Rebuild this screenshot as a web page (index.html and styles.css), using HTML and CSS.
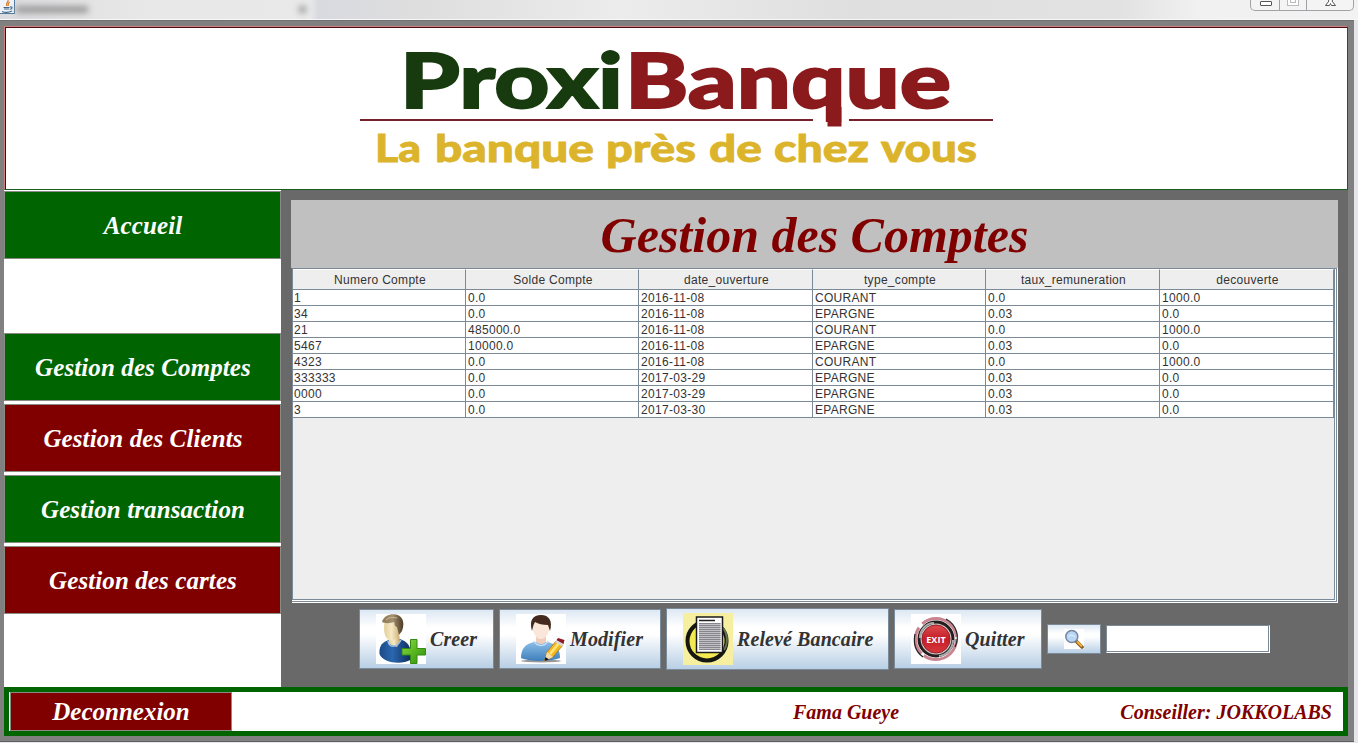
FILE: index.html
```
<!DOCTYPE html>
<html lang="fr">
<head>
<meta charset="utf-8">
<title>ProxiBanque</title>
<link rel="stylesheet" href="styles.css">
</head>
<body>
<div class="titlebar">
  <svg class="java" width="15" height="14" viewBox="0 0 15 14"><rect x="-1" y="-1" width="15.5" height="14.5" fill="#eef4fa" stroke="#557b9c"/><path d="M8 0C9 2 5 3 7 6M10 2C7 3 9 4 8 6" fill="none" stroke="#e07b28" stroke-width="1.2"/><path d="M3.5 7.5h6M4 9h5M2 11.5c3 1.2 7 1 10-.5M10 7c3-.6 2.500 2-.3 2.300" fill="none" stroke="#426788" stroke-width="1.100"/></svg>
  <div class="ghost"></div>
  <div class="ghost small"></div>
  <div class="controls">
    <span class="ctl"><svg width="28" height="10"><rect x="9.500" y="1.500" width="11" height="4" rx=".5" fill="#fff" stroke="#555"/></svg></span>
    <span class="ctl"><svg width="26" height="10"><rect x="7.500" y="-3.500" width="11" height="9" fill="#fff" stroke="#bbb"/><rect x="10.500" y="-1.500" width="5" height="4" fill="#fff" stroke="#bbb"/></svg></span>
    <span class="ctl"><svg width="46" height="10"><path d="M20-2l2 3-3.500 4.500h4l1-2 1 2h4L25 1l2-3" fill="#fff" stroke="#555"/></svg></span>
  </div>
</div>
<div class="frame">
  <header class="banner">
    <svg width="1342" height="161" viewBox="5 27 1342 161">
      <g class="brand">
        <text x="400" y="107.500" textLength="223" lengthAdjust="spacingAndGlyphs" fill="#173a0e" stroke="#173a0e">Proxi</text>
        <text x="625" y="107.500" textLength="326" lengthAdjust="spacingAndGlyphs" fill="#8a1a1c" stroke="#8a1a1c">Banque</text>
      </g>
      <path d="M832.500 107H841.500V126.500H827.500V107Z" fill="#8a1a1c"/>
      <path d="M360 120H813M849 120H993" stroke="#75202a" stroke-width="2"/>
      <g class="tagline">
        <text x="375" y="161.500" textLength="46" lengthAdjust="spacingAndGlyphs">La</text>
        <text x="435" y="161.500" textLength="159" lengthAdjust="spacingAndGlyphs">banque</text>
        <text x="606" y="161.500" textLength="90" lengthAdjust="spacingAndGlyphs">près</text>
        <text x="709" y="161.500" textLength="53" lengthAdjust="spacingAndGlyphs">de</text>
        <text x="774" y="161.500" textLength="95" lengthAdjust="spacingAndGlyphs">chez</text>
        <text x="881" y="161.500" textLength="96" lengthAdjust="spacingAndGlyphs">vous</text>
      </g>
    </svg>
  </header>
  <div class="body">
    <nav class="side">
      <button class="nav green home">Accueil</button>
      <button class="nav green">Gestion des Comptes</button>
      <button class="nav red">Gestion des Clients</button>
      <button class="nav green">Gestion transaction</button>
      <button class="nav red">Gestion des cartes</button>
    </nav>
    <main class="main">
      <h1 class="heading">Gestion des Comptes</h1>
      <div class="scroll"><div class="viewport">
        <div class="row head"><span>Numero Compte</span><span>Solde Compte</span><span>date_ouverture</span><span>type_compte</span><span>taux_remuneration</span><span>decouverte</span></div>
        <div class="row"><span>1</span><span>0.0</span><span>2016-11-08</span><span>COURANT</span><span>0.0</span><span>1000.0</span></div>
        <div class="row"><span>34</span><span>0.0</span><span>2016-11-08</span><span>EPARGNE</span><span>0.03</span><span>0.0</span></div>
        <div class="row"><span>21</span><span>485000.0</span><span>2016-11-08</span><span>COURANT</span><span>0.0</span><span>1000.0</span></div>
        <div class="row"><span>5467</span><span>10000.0</span><span>2016-11-08</span><span>EPARGNE</span><span>0.03</span><span>0.0</span></div>
        <div class="row"><span>4323</span><span>0.0</span><span>2016-11-08</span><span>COURANT</span><span>0.0</span><span>1000.0</span></div>
        <div class="row"><span>333333</span><span>0.0</span><span>2017-03-29</span><span>EPARGNE</span><span>0.03</span><span>0.0</span></div>
        <div class="row"><span>0000</span><span>0.0</span><span>2017-03-29</span><span>EPARGNE</span><span>0.03</span><span>0.0</span></div>
        <div class="row"><span>3</span><span>0.0</span><span>2017-03-30</span><span>EPARGNE</span><span>0.03</span><span>0.0</span></div>
      </div></div>
      <div class="actions">
        <button class="act creer">
          <svg width="50" height="50" viewBox="0 0 50 50">
            <defs>
              <linearGradient id="suit" x2="1"><stop offset="0" stop-color="#1c4a8a"/><stop offset=".4" stop-color="#2a67ae"/><stop offset="1" stop-color="#0c2a58"/></linearGradient>
              <linearGradient id="skin" x2="1"><stop offset="0" stop-color="#e3cf9a"/><stop offset=".45" stop-color="#f6e9c4"/><stop offset="1" stop-color="#c4a468"/></linearGradient>
              <linearGradient id="hair" x2="1"><stop offset="0" stop-color="#8c7650"/><stop offset=".5" stop-color="#a39070"/><stop offset="1" stop-color="#4b3b25"/></linearGradient>
              <linearGradient id="plus" x2="1" y2="1"><stop offset="0" stop-color="#8ade3d"/><stop offset="1" stop-color="#2c8e08"/></linearGradient>
            </defs>
            <rect width="50" height="50" fill="#fff"/>
            <path d="M3.500 40C3 32 6 28 13 26L24 25C32 28 35 32 36 45C28 51 7 50 3.500 40Z" fill="url(#suit)"/>
            <path d="M13 24L13 30L21 33L24 27L23 20Z" fill="url(#skin)"/>
            <path d="M12 27C13 34 21 34 25 26" fill="none" stroke="#9fc1e4" stroke-width="1.500"/>
            <path d="M8.500 8C7.500 16 8 23 13 26.500C19 27 24 22 25 12L17 5Z" fill="url(#skin)"/>
            <path d="M6 8C8 1 15-.5 20 .5C27 2 29 9 26 17L23 21L21 13C19 13 18 10 18.500 8C14 9.500 9 9.500 6 8Z" fill="url(#hair)"/>
            <path d="M10 6C13 3 17 3 21 4" fill="none" stroke="#cbbb98"/>
            <path d="M34.500 25.500H41V34.500H49.500V41H41V49.500H34.500V41H26V34.500H34.500Z" fill="url(#plus)" stroke="#338a14"/>
          </svg>Creer</button>
        <button class="act modifier">
          <svg width="50" height="50" viewBox="0 0 50 50">
            <defs><linearGradient id="shirt" y2="1" x2="0"><stop offset="0" stop-color="#8bbde9"/><stop offset="1" stop-color="#3e7fba"/></linearGradient></defs>
            <rect width="50" height="50" fill="#fff"/>
            <ellipse cx="25" cy="47" rx="20" ry="1.500" fill="#999"/>
            <path d="M5 44C5 35 9 30 18 28H32C40 30 44 35 44 44C34 48 14 48 5 44Z" fill="url(#shirt)"/>
            <path d="M20 22H30V27C29 31 21 31 20 27Z" fill="#f0cdbb"/>
            <path d="M18 27C21 33 29 33 32 27" fill="none" stroke="#c4def5" stroke-width="1.500"/>
            <path d="M17 8H33V15C33 20 29 25 25 25C21 25 17 20 17 15Z" fill="#fbe6da"/>
            <path d="M16 17C13 6 17 1 25 1C33 1 37 7 34 17L32 11C27 11 22 10 19 8L17.500 11Z" fill="#43291e"/>
            <path d="M28.500 47L31 38L40 27L47 31L37 43Z" fill="#f3b920" stroke="#ab741b" stroke-width=".8"/>
            <path d="M34 40L43 29" stroke="#ffe47a" stroke-width="2.500"/>
            <path d="M31 38L37 43L28.500 47Z" fill="#f4dcae"/><path d="M29.500 43L33 45.500L28.500 47Z" fill="#111"/>
            <path d="M39 28L41 25.500L48 29.500L46 32.500Z" fill="#d8d8d8"/><path d="M40.500 26L42 24L48.500 26L47.500 30Z" fill="#8f1824"/>
          </svg>Modifier</button>
        <button class="act releve">
          <svg width="50" height="52" viewBox="0 0 50 52">
            <rect width="50" height="52" fill="#f6efa0"/>
            <circle cx="24" cy="28" r="19.500" fill="#f4e950" stroke="#15160f" stroke-width="4"/>
            <path d="M40 15C45 21 45 31 41 37" fill="none" stroke="#667052" stroke-width="2"/>
            <path d="M13.500 4H39.500V39.500H13.500Z" fill="#fff" stroke="#1b1b1b" stroke-width="1.500"/>
            <path d="M16 7.500H32" stroke="#222" stroke-width="1.500"/>
            <rect x="16" y="10" width="21.500" height="27" fill="#c0c0c5"/>
            <path d="M16 10.500H37.500M16 12.500H37.500M16 14.500H37.500M16 16.500H37.500M16 18.500H37.500M16 20.500H37.500M16 22.500H37.500M16 24.500H37.500M16 26.500H37.500M16 28.500H37.500M16 30.500H37.500M16 32.500H37.500M16 34.500H37.500M16 36.500H37.500" stroke="#85858b"/>
          </svg>Relevé Bancaire</button>
        <button class="act quitter">
          <svg width="50" height="50" viewBox="0 0 50 50">
            <defs><linearGradient id="exit" x2="0" y2="1"><stop offset="0" stop-color="#dd4c50"/><stop offset=".5" stop-color="#c51d26"/><stop offset="1" stop-color="#d8383e"/></linearGradient></defs>
            <rect width="50" height="50" fill="#fff"/>
            <circle cx="25" cy="25" r="20.500" fill="none" stroke="#c88491" stroke-width="3" stroke-dasharray="45 3 28 5"/>
            <path d="M35 5C46 11 49 23 44 33M12 43C5 38 2 30 4 20" fill="none" stroke="#222" stroke-width="1.200"/>
            <circle cx="25" cy="25" r="17" fill="#c9c3c4" stroke="#241c1d" stroke-width="3"/>
            <path d="M9 24C9 16 15 9 23 9M42 26C42 34 36 41 28 42" fill="none" stroke="#aaa" stroke-width="2"/>
            <circle cx="25" cy="25" r="14" fill="url(#exit)" stroke="#992029"/>
            <text x="25" y="28.700" class="exit-label" text-anchor="middle">EXIT</text>
          </svg>Quitter</button>
        <button class="act find" aria-label="Rechercher">
          <svg width="20" height="20" viewBox="0 0 20 20"><rect width="20" height="20" fill="#fff"/><path d="M12 12L18 18" stroke="#8a5b20" stroke-width="3.600" stroke-linecap="round"/><path d="M13 12.500L18 17.500" stroke="#efb43c" stroke-width="2"/><circle cx="7.800" cy="7.500" r="6" fill="#b9d6f5" stroke="#7785a0" stroke-width="1.500"/><path d="M4.500 7.500Q8 4.500 11 8" fill="none" stroke="#e8f4ff"/></svg>
        </button>
        <input class="query" type="text" aria-label="Recherche">
      </div>
    </main>
  </div>
  <footer class="foot">
    <button class="logout">Deconnexion</button>
    <span class="user">Fama Gueye</span>
    <span class="role">Conseiller: JOKKOLABS</span>
  </footer>
</div>
</body>
</html>
```
FILE: styles.css
```
* { box-sizing: border-box; }
body {
  margin: 0;
  width: 1358px;
  height: 743px;
  overflow: hidden;
  background: #e6e6ea;
  font-family: "Liberation Serif", serif;
}
button { margin: 0; padding: 0; border-radius: 0; font: italic bold 25px "Liberation Serif", serif; white-space: nowrap; }
svg { display: block; flex: none; }

.titlebar {
  display: flex;
  height: 20px;
  background: linear-gradient(90deg, #dcdcdf 0, #e8e8e8 150px, #e9e9e9 310px, #d9dae0 318px, #dedede 420px, #ececec 620px, #dfdfe0 850px, #e2e2e2 1120px, #f1f1f1 1200px, #f2f2f3 100%);
  border-bottom: 1px solid #f8f8f8;
}
.ghost { width: 72px; height: 7px; margin: 6px 0 0 1px; background: #999; filter: blur(3px); }
.ghost.small { width: 7px; margin-left: 211px; background: #999; }
.controls {
  display: flex;
  height: 11px;
  margin-left: auto;
  margin-right: 4px;
  border: 1px solid #a2a2a6;
  border-top: 0;
  border-radius: 0 0 5px 5px;
  overflow: hidden;
  background: #f4f4f5;
}
.ctl + .ctl { border-left: 1px solid #a2a2a6; }

.frame {
  display: flex;
  flex-direction: column;
  width: 1354px;
  height: 722px;
  padding: 5px 6px 5px 4px;
  background: #808080;
  border-top: 1px solid #707070;
  border-bottom: 1px solid #5f5f62;
}
.banner {
  height: 164px;
  background: #fff;
  border: 1px solid #185c20;
  border-top-color: #d08080;
  border-left-color: #d08080;
  box-shadow: inset 1px 1px #4a0c10;
  overflow: hidden;
}
.brand text { font: 900 77px Lato, sans-serif; stroke-width: 1.8px; }
.tagline text { font: 900 38px Lato, sans-serif; fill: #dcb42c; stroke: #dcb42c; stroke-width: .8px; }

.body { display: flex; height: 497px; }
.side { display: flex; flex-direction: column; gap: 3px; width: 277px; padding: 1px 0 0; background: #fff; }
.nav { height: 68px; color: #fff; border: 1px solid #8b8b85; padding: 2px 0 0 1px; letter-spacing: .1px; }
.home { margin-bottom: 71px; }
.green { background: #006400; }
.red { background: #800000; }

.main { display: flex; flex-direction: column; width: 1067px; padding: 10px 10px 0; background: #696969; }
.heading {
  height: 68px;
  margin: 0;
  background: #c0c0c0;
  color: #800000;
  font: italic bold 50px/71px "Liberation Serif", serif;
  text-align: center;
}
.scroll { height: 335px; margin-left: 1px; background: #7a8a99; border: solid #fff; border-width: 0 1px 1px 0; padding: 1px 1px 1px 0; }
.viewport { width: 1043px; height: 331px; background: #eee; border: 1px solid #7a8a99; border-top: 0; box-shadow: 0 0 0 1px #fff; clip-path: inset(0 -1px -1px 0); }
.row {
  display: grid;
  grid-template-columns: 173px 173px 174px 173px 174px 174px;
  width: 1041px;
  height: 16px;
  background: #fff;
  border-bottom: 1px solid #7a8a99;
  color: #333;
  font: 12px/17px "Liberation Sans", sans-serif;
  letter-spacing: .3px;
}
.row span { height: 15px; padding-left: 2px; border-right: 1px solid #7a8a99; }
.row span:first-child { padding-left: 1px; }
.head { height: 21px; background: #eee; line-height: 21px; text-align: center; }
.head span, .head span:first-child { height: 20px; padding: 0 0 0 2px; border-top: 1px solid #fff; }

.actions { display: flex; align-items: center; gap: 5px; height: 72px; padding-left: 68px; }
.act {
  display: flex;
  align-items: center;
  gap: 4px;
  height: 60px;
  padding-left: 16px;
  border: 1px solid #7a8a99;
  background: linear-gradient(#dde8f3, #fff 30%, #fff 42%, #b8cfe5);
  color: #333;
  font-size: 20px;
  letter-spacing: .1px;
}
.creer { width: 135px; }
.modifier { width: 162px; }
.releve { width: 223px; height: 62px; }
.quitter { width: 148px; }
.find { width: 54px; height: 30px; }
.exit-label { font: bold 9px "Open Sans", sans-serif; fill: #fff; }
.query { width: 164px; height: 28px; border: 1px solid #fff; border-top-color: #7a8a99; border-left-color: #7a8a99; box-shadow: inset -1px -1px #7a8a99, inset 1px 1px #fff; background: #fff; padding: 0; }

.foot { display: flex; align-items: center; height: 49px; border: 5px solid #006400; background: #fff; color: #800000; font: italic bold 20px "Liberation Serif", serif; }
.logout { width: 222px; height: 39px; margin-left: 1px; background: #800000; border: 1px solid #8b8b85; color: #fff; }
.user { margin-left: 561px; padding-top: 1px; }
.role { margin-left: auto; margin-right: 11px; padding-top: 1px; }
```
